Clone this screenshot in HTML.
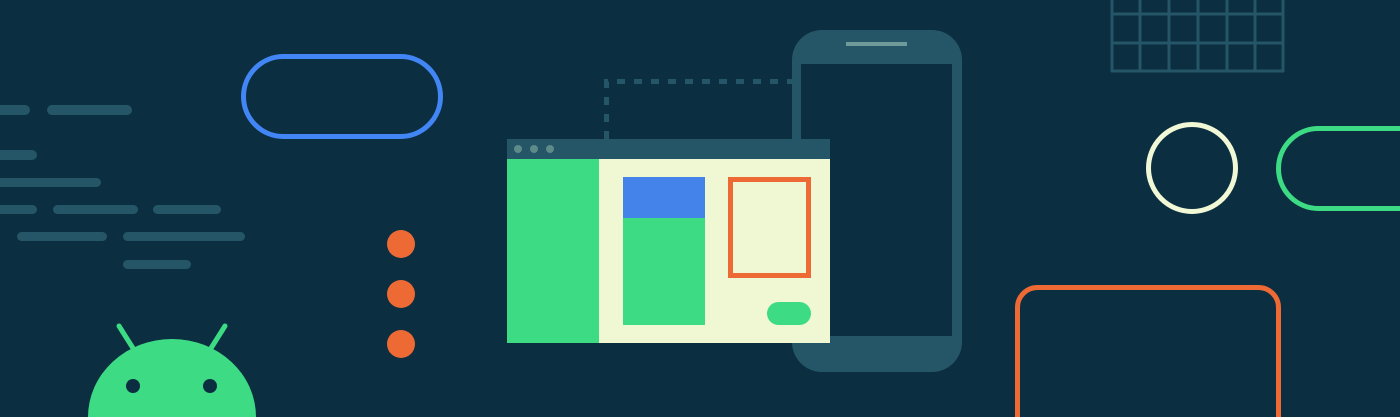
<!DOCTYPE html>
<html><head><style>
html,body{margin:0;padding:0;background:#0b2e41;width:1400px;height:417px;overflow:hidden}
svg{display:block}
</style></head><body>
<svg width="1400" height="417" viewBox="0 0 1400 417" xmlns="http://www.w3.org/2000/svg">
<rect width="1400" height="417" fill="#0b2e41"/>
<g fill="#255667">
<rect x="-5" y="105" width="35" height="10" rx="5"/>
<rect x="47" y="105" width="85" height="10" rx="5"/>
<rect x="-5" y="150" width="42" height="10" rx="5"/>
<rect x="-5" y="178" width="106" height="9" rx="4.5"/>
<rect x="-5" y="205" width="42" height="9" rx="4.5"/>
<rect x="53" y="205" width="85" height="9" rx="4.5"/>
<rect x="153" y="205" width="68" height="9" rx="4.5"/>
<rect x="17" y="232" width="90" height="9" rx="4.5"/>
<rect x="123" y="232" width="122" height="9" rx="4.5"/>
<rect x="123" y="260" width="68" height="9" rx="4.5"/>
</g>
<g fill="#3ddc84">
<path d="M88 417 A84 78 0 0 1 256 417 Z"/>
<line x1="119" y1="326" x2="136" y2="353" stroke="#3ddc84" stroke-width="5" stroke-linecap="round"/>
<line x1="225" y1="326" x2="208" y2="353" stroke="#3ddc84" stroke-width="5" stroke-linecap="round"/>
</g>
<circle cx="133" cy="386" r="7" fill="#0b2e41"/>
<circle cx="210" cy="386" r="7" fill="#0b2e41"/>
<rect x="243.5" y="56.5" width="197" height="80" rx="40" fill="none" stroke="#4285f4" stroke-width="5"/>
<g fill="#ee6a35">
<circle cx="401" cy="244" r="14"/><circle cx="401" cy="294" r="14"/><circle cx="401" cy="344" r="14"/>
</g>
<path d="M606.5 139 V81.5 H792" fill="none" stroke="#255667" stroke-width="5" stroke-dasharray="8 9"/>
<rect x="792" y="30" width="170" height="342" rx="30" fill="#255667"/>
<rect x="801" y="64" width="151" height="272" fill="#0b2e41"/>
<rect x="846" y="42" width="61" height="4" fill="#6f9a9a"/>
<rect x="507" y="139" width="323" height="20" fill="#255667"/>
<g fill="#5e8a8a"><circle cx="518" cy="149" r="4"/><circle cx="534" cy="149" r="4"/><circle cx="550" cy="149" r="4"/></g>
<rect x="507" y="159" width="92" height="184" fill="#3ddc84"/>
<rect x="599" y="159" width="231" height="184" fill="#eff8d2"/>
<rect x="623" y="177" width="82" height="148" fill="#3ddc84"/>
<rect x="623" y="177" width="82" height="41" fill="#4484ea"/>
<rect x="730.5" y="179.5" width="78" height="96" fill="none" stroke="#ee6a35" stroke-width="5"/>
<rect x="767" y="302" width="44" height="23" rx="11.5" fill="#3ddc84"/>
<g stroke="#255667" stroke-width="3" fill="none">
<path d="M1112 0V72M1140 0V72M1169 0V72M1198 0V72M1227 0V72M1255 0V72M1283 0V72M1111 14H1284M1111 43H1284M1111 71H1284"/>
</g>
<circle cx="1192" cy="168" r="43.5" fill="none" stroke="#f1f8d6" stroke-width="5"/>
<path d="M1400 128.5 H1318.5 A40 40 0 0 0 1318.5 208.5 H1400" fill="none" stroke="#3ddc84" stroke-width="5"/>
<path d="M1017.5 417 V307.5 A20 20 0 0 1 1037.5 287.5 H1258.5 A20 20 0 0 1 1278.5 307.5 V417" fill="none" stroke="#ee6a35" stroke-width="5"/>
</svg>
</body></html>
